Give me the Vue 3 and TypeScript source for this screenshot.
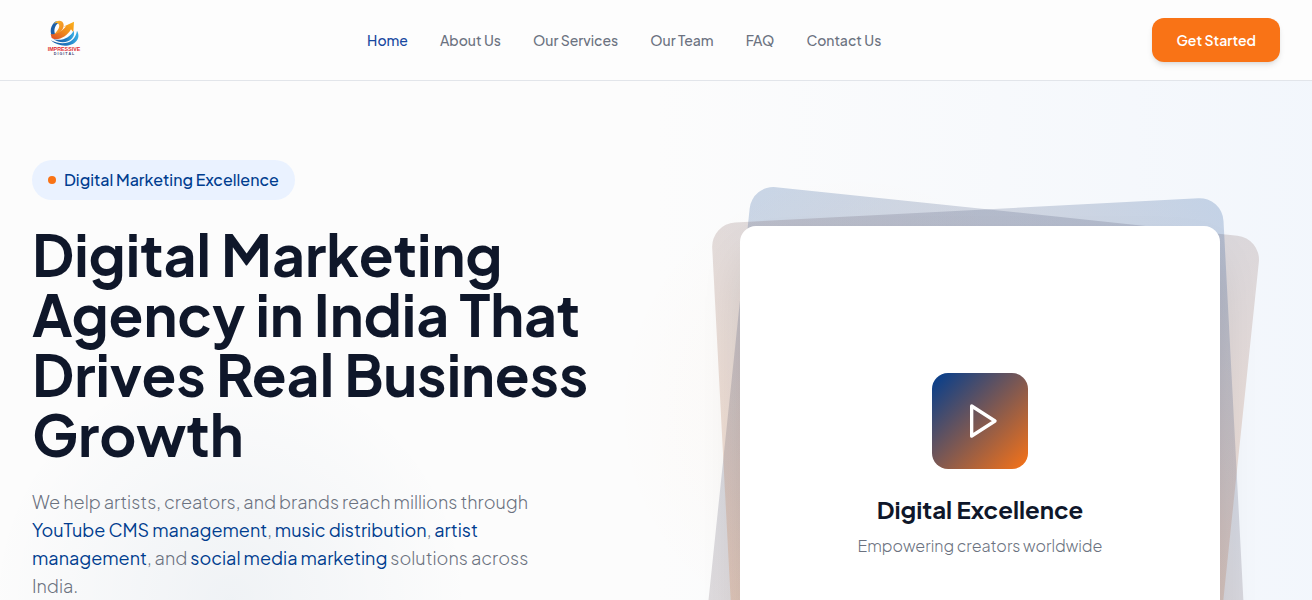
<script setup lang="ts">
interface NavItem {
  label: string
  href: string
  active?: boolean
}

const navItems: NavItem[] = [
  { label: 'Home', href: '#home', active: true },
  { label: 'About Us', href: '#about' },
  { label: 'Our Services', href: '#services' },
  { label: 'Our Team', href: '#team' },
  { label: 'FAQ', href: '#faq' },
  { label: 'Contact Us', href: '#contact' },
]
</script>

<template>
  <div class="page">
    <header class="header">
      <a class="logo" href="#home" aria-label="Impressive Digital">
        <svg viewBox="6 0 192 180" aria-hidden="true">
          <defs>
            <linearGradient id="swirl" x1="0" y1="0" x2="1" y2="1">
              <stop offset="0" stop-color="#fbc02d" />
              <stop offset="1" stop-color="#ec7a22" />
            </linearGradient>
            <linearGradient id="arrow" x1="1" y1="0" x2="0" y2="1">
              <stop offset="0" stop-color="#fbb21b" />
              <stop offset="0.5" stop-color="#f08a1d" />
              <stop offset="1" stop-color="#dc4a26" />
            </linearGradient>
            <linearGradient id="wave" x1="0" y1="0" x2="1" y2="0">
              <stop offset="0" stop-color="#1b5ba6" />
              <stop offset="0.6" stop-color="#1f78c0" />
              <stop offset="1" stop-color="#3bb0e5" />
            </linearGradient>
          </defs>
          <path d="M78 34C60 46 59 66 67 82L78 78C70 64 72 48 86 38Z" fill="#1c5fa8" />
          <path d="M72 42C80 27 101 30 101 45C101 60 86 76 66 80C80 66 91 52 87 44C84 37 77 38 72 42Z" fill="url(#swirl)" />
          <path d="M62 72C80 76 98 62 108 49L100 50L132 35L130 67L123 58C110 82 82 94 65 84Z" fill="url(#arrow)" />
          <path d="M70 87C96 96 122 80 131 62C140 88 102 110 70 87Z" fill="url(#wave)" />
          <path d="M62 91C104 110 136 96 141 62C162 98 104 126 62 91Z" fill="url(#wave)" />
          <text x="102" y="124" text-anchor="middle" class="logo-name">IMPRESSIVE</text>
          <text x="102" y="136" text-anchor="middle" class="logo-sub">D I G I T A L</text>
        </svg>
      </a>
      <nav class="nav" aria-label="Main">
        <a
          v-for="item in navItems"
          :key="item.label"
          :href="item.href"
          class="nav-link"
          :class="{ active: item.active }"
        >{{ item.label }}</a>
      </nav>
      <button class="cta" type="button">Get Started</button>
    </header>

    <main class="hero">
      <section class="intro">
        <p class="pill"><span class="dot"></span>Digital Marketing Excellence</p>
        <h1>Digital Marketing Agency in India That Drives Real Business Growth</h1>
        <p class="lead">
          We help artists, creators, and brands reach millions through
          <a href="#youtube">YouTube CMS management</a>, <a href="#music">music distribution</a>,
          <a href="#artist">artist management</a>, and
          <a href="#social">social media marketing</a> solutions across India.
        </p>
      </section>

      <section class="visual">
        <div class="stack">
          <div class="sheet sheet-right"></div>
          <div class="sheet sheet-left"></div>
          <div class="card">
            <div class="play">
              <svg viewBox="0 0 24 24" aria-hidden="true">
                <polygon points="7 3 21 12 7 21" />
              </svg>
            </div>
            <h2>Digital Excellence</h2>
            <p>Empowering creators worldwide</p>
          </div>
        </div>
      </section>
    </main>
  </div>
</template>

<style>
body {
  margin: 0;
  background: #fcfcfc;
}
</style>

<style scoped>
.page {
  font-family: "Plus Jakarta Sans", Inter, "Liberation Sans", sans-serif;
  color: #0f172a;
  overflow: hidden;
}

.header {
  position: relative;
  z-index: 2;
  box-sizing: border-box;
  height: 80px;
  padding: 0 32px;
  display: flex;
  align-items: center;
  justify-content: space-between;
  background: #fdfdfd;
  box-shadow: 0 1px 0 #e2e5ea;
}

.logo svg {
  display: block;
  width: 64px;
  height: 60px;
}

.logo-name {
  font: 900 16px "Liberation Sans", sans-serif;
  fill: #e02a30;
}

.logo-sub {
  font: 700 11px "Liberation Sans", sans-serif;
  fill: #3c4474;
}

.nav {
  display: flex;
  gap: 32px;
}

.nav-link {
  font-size: 14px;
  line-height: 20px;
  font-weight: 500;
  color: #6b7280;
  text-decoration: none;
  white-space: nowrap;
}

.nav-link.active {
  color: #1748a0;
}

.cta {
  height: 44px;
  padding: 0 24px;
  border: 0;
  border-radius: 12px;
  background: #f97316;
  color: #fff;
  font: inherit;
  font-size: 14px;
  font-weight: 600;
  white-space: nowrap;
  cursor: pointer;
  box-shadow: 0 4px 6px -1px rgba(0, 0, 0, 0.1), 0 2px 4px -2px rgba(0, 0, 0, 0.1);
}

.hero {
  display: grid;
  grid-template-columns: 1fr 1fr;
  gap: 48px;
  align-items: start;
  padding: 80px 32px;
  background:
    radial-gradient(circle at 230px 520px, rgba(0, 61, 120, 0.05), rgba(0, 61, 120, 0) 240px),
    radial-gradient(circle at 65% 330px, rgba(249, 130, 22, 0.04), rgba(249, 130, 22, 0) 240px),
    linear-gradient(to right, rgba(240, 245, 252, 0) 50%, rgba(240, 245, 252, 0.8) 100%);
}

.pill {
  display: inline-flex;
  align-items: center;
  gap: 8px;
  margin: 0 0 24px;
  padding: 8px 16px;
  border-radius: 20px;
  background: #eaf2ff;
  color: #003d8f;
  font-size: 16px;
  line-height: 24px;
  font-weight: 500;
  white-space: nowrap;
}

.dot {
  width: 8px;
  height: 8px;
  border-radius: 50%;
  background: #f97316;
}

h1 {
  margin: 0 0 24px;
  font-size: 57px;
  line-height: 60px;
  font-weight: 700;
}

.lead {
  margin: 0;
  max-width: 512px;
  font-size: 18px;
  line-height: 28px;
  font-weight: 300;
  color: #6b7280;
}

.lead a {
  color: #003d8f;
  font-weight: 400;
  text-decoration: none;
}

.visual {
  display: flex;
  justify-content: center;
  padding-top: 50px;
}

.stack {
  position: relative;
  box-sizing: border-box;
  width: 100%;
  max-width: 512px;
  aspect-ratio: 1;
  padding: 16px;
}

.sheet {
  position: absolute;
  inset: 0;
  border-radius: 24px;
  opacity: 0.2;
}

.sheet-right {
  background: linear-gradient(to bottom right, #003d8f, #f97316);
  transform: rotate(6deg);
}

.sheet-left {
  background: linear-gradient(to bottom left, #003d8f, #f97316);
  transform: rotate(-3deg);
}

.card {
  position: relative;
  box-sizing: border-box;
  height: 100%;
  display: flex;
  flex-direction: column;
  align-items: center;
  justify-content: center;
  border-radius: 16px;
  background: #fff;
  box-shadow: 0 25px 50px -12px rgba(0, 0, 0, 0.15);
}

.play {
  width: 96px;
  height: 96px;
  margin-bottom: 24px;
  display: flex;
  align-items: center;
  justify-content: center;
  border-radius: 16px;
  background: linear-gradient(to bottom right, #003d8f, #f97316);
}

.play svg {
  width: 40px;
  height: 40px;
  fill: none;
  stroke: #fff;
  stroke-width: 2;
  stroke-linecap: round;
  stroke-linejoin: round;
}

.card h2 {
  margin: 0 0 8px;
  font-size: 24px;
  line-height: 32px;
  font-weight: 700;
}

.card p {
  margin: 0;
  font-size: 16px;
  line-height: 26px;
  font-weight: 300;
  color: #6b7280;
}
</style>
